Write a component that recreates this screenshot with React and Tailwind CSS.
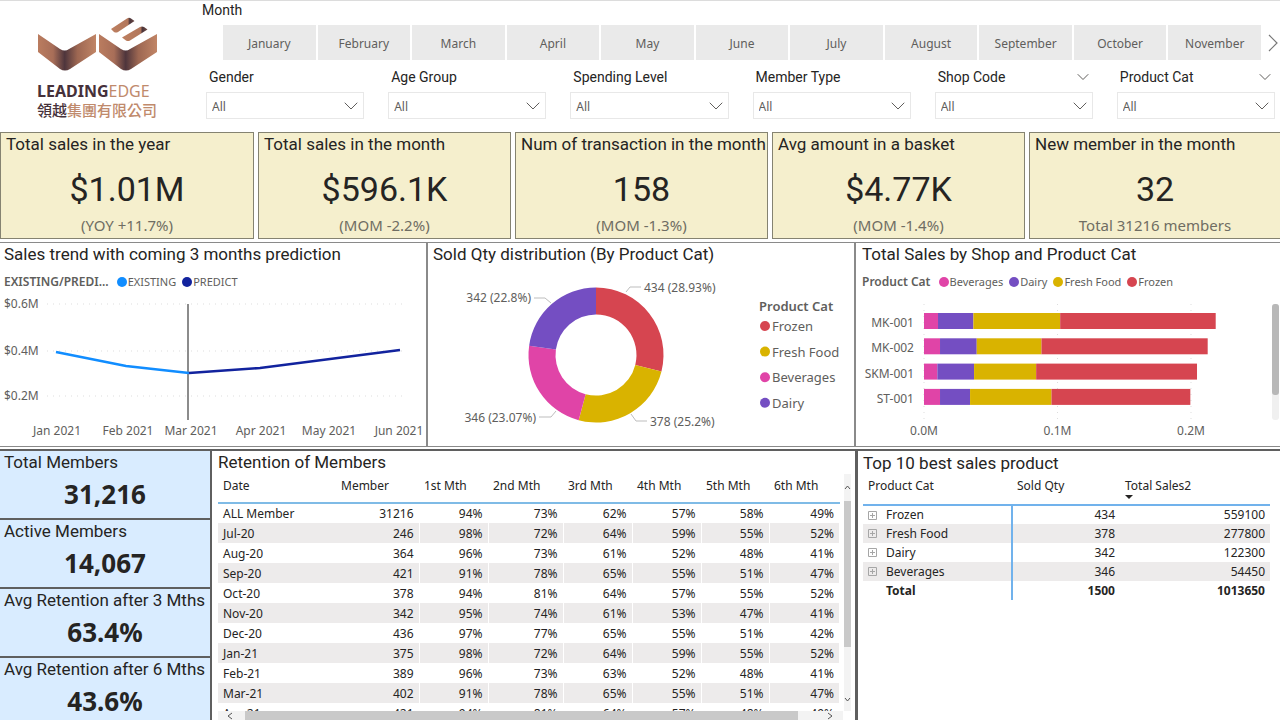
import { useState } from 'react';
import { ChevronDown } from 'lucide-react';

const months = [
  'January', 'February', 'March', 'April', 'May', 'June',
  'July', 'August', 'September', 'October', 'November',
];

const filters = [
  { id: 'gender', name: 'Gender' },
  { id: 'age-group', name: 'Age Group' },
  { id: 'spending-level', name: 'Spending Level' },
  { id: 'member-type', name: 'Member Type' },
  { id: 'shop-code', name: 'Shop Code', menu: true },
  { id: 'product-cat', name: 'Product Cat', menu: true },
];

const kpis = [
  { title: 'Total sales in the year', value: '$1.01M', note: '(YOY +11.7%)' },
  { title: 'Total sales in the month', value: '$596.1K', note: '(MOM -2.2%)' },
  { title: 'Num of transaction in the month', value: '158', note: '(MOM -1.3%)' },
  { title: 'Avg amount in a basket', value: '$4.77K', note: '(MOM -1.4%)' },
  { title: 'New member in the month', value: '32', note: 'Total 31216 members' },
];

const memberStats = [
  { title: 'Total Members', value: '31,216' },
  { title: 'Active Members', value: '14,067' },
  { title: 'Avg Retention after 3 Mths', value: '63.4%' },
  { title: 'Avg Retention after 6 Mths', value: '43.6%' },
];

const colors = {
  Beverages: '#e044a7',
  Dairy: '#744ec2',
  'Fresh Food': '#d9b300',
  Frozen: '#d64550',
  EXISTING: '#118dff',
  PREDICT: '#12239e',
};

// Sold quantity per category, clockwise from the top
const soldQty = [
  { name: 'Frozen', qty: 434 },
  { name: 'Fresh Food', qty: 378 },
  { name: 'Beverages', qty: 346 },
  { name: 'Dairy', qty: 342 },
];

// Sales in thousands, in legend order
const stackOrder = ['Beverages', 'Dairy', 'Fresh Food', 'Frozen'];
const shopSales = [
  { shop: 'MK-001', values: [10.5, 26.5, 65, 116.5] },
  { shop: 'MK-002', values: [12, 27.5, 48.5, 124.5] },
  { shop: 'SKM-001', values: [10, 27.5, 46.5, 120.5] },
  { shop: 'ST-001', values: [12, 22.5, 61, 104] },
];

const retentionHead = ['Date', 'Member', '1st Mth', '2nd Mth', '3rd Mth', '4th Mth', '5th Mth', '6th Mth'];
const retention = [
  ['ALL Member', '31216', '94%', '73%', '62%', '57%', '58%', '49%'],
  ['Jul-20', '246', '98%', '72%', '64%', '59%', '55%', '52%'],
  ['Aug-20', '364', '96%', '73%', '61%', '52%', '48%', '41%'],
  ['Sep-20', '421', '91%', '78%', '65%', '55%', '51%', '47%'],
  ['Oct-20', '378', '94%', '81%', '64%', '57%', '55%', '52%'],
  ['Nov-20', '342', '95%', '74%', '61%', '53%', '47%', '41%'],
  ['Dec-20', '436', '97%', '77%', '65%', '55%', '51%', '42%'],
  ['Jan-21', '375', '98%', '72%', '64%', '59%', '55%', '52%'],
  ['Feb-21', '389', '96%', '73%', '63%', '52%', '48%', '41%'],
  ['Mar-21', '402', '91%', '78%', '65%', '55%', '51%', '47%'],
  ['Apr-21', '421', '94%', '81%', '64%', '57%', '48%', '49%'],
];

const topProducts = [
  ['Frozen', '434', '559100'],
  ['Fresh Food', '378', '277800'],
  ['Dairy', '342', '122300'],
  ['Beverages', '346', '54450'],
];

function Logo() {
  return (
    <div className="w-[198px] shrink-0 pt-4 pl-[37px]">
      <svg width="121" height="56" viewBox="37 17 121 56" role="img" aria-label="Leading Edge logo">
        <defs>
          <linearGradient id="fold">
            <stop offset="0" stopColor="#ba7c5f" />
            <stop offset="0.26" stopColor="#a86e58" />
            <stop offset="0.46" stopColor="#4e353c" />
            <stop offset="0.68" stopColor="#9d6752" />
            <stop offset="1" stopColor="#c18566" />
          </linearGradient>
          <linearGradient id="bar">
            <stop offset="0" stopColor="#bd7f60" />
            <stop offset="0.72" stopColor="#b3775b" />
            <stop offset="0.8" stopColor="#4b343a" />
            <stop offset="1" stopColor="#6d4a45" />
          </linearGradient>
        </defs>
        <path d="M38 34 60 49Q65 52 69 49L96 34V52L70 69Q65 72 60 69L38 52Z" fill="url(#fold)" />
        <path d="M99 34 121 49Q126 52 130 49L157 34V52L131 69Q126 72 121 69L99 52Z" fill="url(#fold)" />
        <path d="M111 29 127 18.5Q129 17 131 18.5L134.500 21 118 32Q116 33 114 32Z" fill="url(#bar)" />
        <path d="M122 37.500 140 27Q142 26 144 27L147.500 29.500 130 40.500Q128 41.500 126 40.500Z" fill="url(#bar)" />
      </svg>
      <p className="mt-2 text-[16px] leading-[20px] text-[#c08a6c]">
        <span className="font-bold text-[#46313a]">LEADING</span>EDGE
      </p>
      <p className="font-['Noto_Sans_CJK_TC',sans-serif] text-[15px] leading-[18px] font-medium text-[#c08a6c]">
        <span className="text-[#46313a]">領越</span>集團有限公司
      </p>
    </div>
  );
}

function MonthSlicer() {
  const [selected, setSelected] = useState(null);

  return (
    <section className="pl-1">
      <h2 className="font-[Roboto,sans-serif] text-[14px] leading-[18px] text-[#252423]">Month</h2>
      <div className="mt-1.5 flex items-center pl-[21px]">
        <div className="grid flex-1 grid-cols-11 gap-0.5">
          {months.map((month) => (
            <button
              key={month}
              type="button"
              aria-pressed={selected === month}
              onClick={() => setSelected(selected === month ? null : month)}
              className="h-[35px] bg-[#eaeaea] pt-0.5 text-[12px] text-[#605e5c]"
            >
              {month}
            </button>
          ))}
        </div>
        <button type="button" aria-label="Next months" className="flex w-[19px] justify-end pr-0.5">
          <svg width="10" height="18" viewBox="0 0 10 18" fill="none" stroke="#777" strokeWidth="1.2">
            <path d="M1 1 9 9 1 17" />
          </svg>
        </button>
      </div>
    </section>
  );
}

function Filter({ filter }) {
  return (
    <div>
      <div className="flex items-center justify-between pl-[3px]">
        <label htmlFor={filter.id} className="font-[Roboto,sans-serif] text-[14px] leading-[18px] text-[#252423]">
          {filter.name}
        </label>
        {filter.menu && <ChevronDown size={20} strokeWidth={1.2} className="-my-px text-[#605e5c]" />}
      </div>
      <div className="relative mt-1.5">
        <select
          id={filter.id}
          className="block h-[27px] w-full appearance-none border border-[#e8e8e8] bg-white px-[5px] pt-0.5 text-[12px] text-[#605e5c]"
        >
          <option>All</option>
        </select>
        <ChevronDown
          size={24}
          strokeWidth={1}
          className="pointer-events-none absolute top-0.5 right-px text-[#605e5c]"
        />
      </div>
    </div>
  );
}

function PanelTitle({ children }) {
  return (
    <h2 className="pt-px font-[Roboto,sans-serif] text-[17px] leading-[20px] whitespace-nowrap text-[#252423]">
      {children}
    </h2>
  );
}

function Legend({ title, items }) {
  return (
    <div className="mt-2 flex h-5 items-center gap-2 text-[12px] whitespace-nowrap text-[#605e5c]">
      <span className="font-semibold">{title}</span>
      <ul className="flex gap-1.5 text-[11px]">
        {items.map((item) => (
          <li key={item} className="flex items-center gap-px">
            <span className="size-2.5 rounded-full" style={{ background: colors[item] }} />
            {item}
          </li>
        ))}
      </ul>
    </div>
  );
}

function TrendChart() {
  return (
    <svg viewBox="0 0 426 150" className="block w-full" fontSize="12" fill="#605e5c" role="img" aria-label="Sales trend">
      {[['$0.6M', 8], ['$0.4M', 55], ['$0.2M', 100]].map(([label, y]) => (
        <g key={label}>
          <text x="4" y={y + 4}>{label}</text>
          <path d={`M47 ${y}H406`} stroke="#ddd" strokeDasharray="1 5" />
        </g>
      ))}
      <path d="M188 8V124" stroke="#8c8c8c" strokeWidth="2" />
      <path d="M56 56 126 70 189 77" stroke={colors.EXISTING} strokeWidth="2.6" fill="none" />
      <path d="M189 77 260 72 400 54" stroke={colors.PREDICT} strokeWidth="2.6" fill="none" />
      <g textAnchor="middle">
        {[['Jan', 57], ['Feb', 128], ['Mar', 191], ['Apr', 261], ['May', 329], ['Jun', 399]].map(([month, x]) => (
          <text key={month} x={x} y="139">{month} 2021</text>
        ))}
      </g>
    </svg>
  );
}

function DonutChart() {
  const total = soldQty.reduce((sum, item) => sum + item.qty, 0);
  const point = (share, r) => {
    const angle = share * 2 * Math.PI;
    return `${168 + r * Math.sin(angle)} ${92 - r * Math.cos(angle)}`;
  };
  let start = 0;

  return (
    <svg viewBox="0 1 426 182" className="block w-full" fontSize="12" fill="#605e5c" role="img" aria-label="Sold quantity">
      {soldQty.map((item) => {
        const from = start;
        const to = start + item.qty / total;
        start = to;
        return (
          <path
            key={item.name}
            fill={colors[item.name]}
            d={`M${point(from, 67.5)}A67.5 67.5 0 0 1 ${point(to, 67.5)}L${point(to, 40.5)}A40.5 40.5 0 0 0 ${point(from, 40.5)}Z`}
          />
        );
      })}
      <path
        d="M198 29 202 24H213M106 35H117L123 40M111 154H123L128 148M203 151 208 158H219"
        fill="none"
        stroke="#bdbdbd"
      />
      <text x="216" y="29">434 (28.93%)</text>
      <text x="222" y="163">378 (25.2%)</text>
      <text x="103" y="39" textAnchor="end">342 (22.8%)</text>
      <text x="108" y="159" textAnchor="end">346 (23.07%)</text>
      <g fontSize="13">
        <text x="331" y="48" fontWeight="600">Product Cat</text>
        {soldQty.map((item, i) => (
          <g key={item.name}>
            <circle cx="337" cy={63 + i * 25.6} r="5" fill={colors[item.name]} />
            <text x="344" y={68 + i * 25.6}>{item.name}</text>
          </g>
        ))}
      </g>
    </svg>
  );
}

function ShopChart() {
  const scale = 1.335;

  return (
    <svg viewBox="0 0 424 150" className="block w-full" fontSize="12" fill="#605e5c" role="img" aria-label="Sales by shop">
      {[['0.0M', 0], ['0.1M', 100], ['0.2M', 200]].map(([label, value]) => (
        <g key={label}>
          <path d={`M${68 + value * scale} 8V124`} stroke="#ddd" strokeDasharray="1 5" />
          <text x={68 + value * scale} y="139" textAnchor="middle">{label}</text>
        </g>
      ))}
      {shopSales.map((row, i) => {
        let x = 68;
        return (
          <g key={row.shop}>
            <text x="58" y={31 + i * 25.3} textAnchor="end">{row.shop}</text>
            {row.values.map((value, j) => {
              const left = x;
              x += value * scale;
              return (
                <rect
                  key={stackOrder[j]}
                  x={left}
                  y={17 + i * 25.3}
                  width={value * scale}
                  height="16"
                  fill={colors[stackOrder[j]]}
                />
              );
            })}
          </g>
        );
      })}
      <rect x="416" y="8" width="7" height="116" rx="3" fill="#f0f0f0" />
      <rect x="416" y="8" width="7" height="91" rx="3" fill="#b8b8b8" />
    </svg>
  );
}

function RetentionPanel() {
  return (
    <section className="flex min-h-0 flex-col overflow-hidden border-t-2 border-r-2 border-[#5f5f5f] pl-1.5">
      <PanelTitle>Retention of Members</PanelTitle>
      <div className="mt-0.5 flex min-h-0 flex-1 gap-1 pr-1">
        <div className="min-h-0 flex-1 overflow-hidden">
          <table className="w-full table-fixed border-collapse text-[12px] leading-[18px] text-[#252423]">
            <colgroup>
              <col className="w-[118px]" />
              <col className="w-[83px]" />
              <col className="w-[69px]" />
              <col className="w-[75px]" />
              <col className="w-[69px]" />
              <col className="w-[69px]" />
              <col className="w-[68px]" />
              <col />
            </colgroup>
            <thead>
              <tr className="h-[29px] border-b-2 border-[#7fbbe6]">
                {retentionHead.map((name) => (
                  <th key={name} scope="col" className="px-[5px] pb-1 text-left font-normal whitespace-nowrap">
                    {name}
                  </th>
                ))}
              </tr>
            </thead>
            <tbody>
              {retention.map(([date, ...cells]) => (
                <tr key={date} className="h-5 even:bg-[#edebeb]">
                  <th scope="row" className="px-[5px] pt-px text-left font-normal">{date}</th>
                  {cells.map((cell, i) => (
                    <td key={i} className="border-r border-white px-[5px] pt-px text-right">{cell}</td>
                  ))}
                </tr>
              ))}
            </tbody>
          </table>
        </div>
        <div className="flex w-[7px] flex-col items-center bg-[#f3f3f3]">
          <svg width="7" height="27" viewBox="0 0 7 27" fill="none" stroke="#555">
            <path d="M1 15 3.5 12 6 15" />
          </svg>
          <div className="w-full flex-[146] bg-[#c9c9c9]" />
          <div className="flex-[44]" />
          <svg width="7" height="20" viewBox="0 0 7 20" fill="none" stroke="#555">
            <path d="M1 7 3.5 10 6 7" />
          </svg>
        </div>
      </div>
      <div className="mr-3 flex h-[9px] shrink-0 items-center bg-[#f3f3f3]">
        <svg width="27" height="9" viewBox="0 0 27 9" fill="none" stroke="#555">
          <path d="M14 2 10 5 14 8" />
        </svg>
        <div className="h-full flex-[553] bg-[#c9c9c9]" />
        <svg width="45" height="9" viewBox="0 0 45 9" fill="none" stroke="#555">
          <path d="M30 2 34 5 30 8" />
        </svg>
      </div>
    </section>
  );
}

function ExpandIcon() {
  return (
    <svg width="9" height="9" viewBox="0 0 9 9" fill="none" stroke="#a6a6a6">
      <path d="M.5 .5H8.5V8.5H.5ZM2 4.5H7M4.5 2V7" />
    </svg>
  );
}

function TopProductsPanel() {
  return (
    <section className="border-t-2 border-l border-[#5f5f5f] pt-px pr-2.5 pl-[5px]">
      <PanelTitle>Top 10 best sales product</PanelTitle>
      <table className="mt-1 w-full table-fixed border-collapse text-[12px] leading-[18px] text-[#252423]">
        <colgroup>
          <col className="w-[149px]" />
          <col className="w-[108px]" />
          <col />
        </colgroup>
        <thead>
          <tr className="h-[28px] border-b-2 border-[#71b2ec] text-left align-top whitespace-nowrap">
            <th scope="col" className="px-[5px] font-normal">Product Cat</th>
            <th scope="col" className="px-[5px] font-normal">Sold Qty</th>
            <th scope="col" aria-sort="descending" className="px-[5px] font-normal">
              Total Sales2
              <svg width="8" height="4" viewBox="0 0 8 4" className="block">
                <path d="M0 0H8L4 4Z" fill="#252423" />
              </svg>
            </th>
          </tr>
        </thead>
        <tbody>
          {topProducts.map(([name, qty, sales]) => (
            <tr key={name} className="h-[19px] even:bg-[#edebeb]">
              <th scope="row" className="border-r-2 border-[#71b2ec] px-[5px] font-normal">
                <span className="flex items-center gap-[9px]">
                  <button type="button" aria-label={`Expand ${name}`}>
                    <ExpandIcon />
                  </button>
                  {name}
                </span>
              </th>
              <td className="px-[5px] text-right">{qty}</td>
              <td className="px-[5px] text-right">{sales}</td>
            </tr>
          ))}
        </tbody>
        <tfoot>
          <tr className="h-[19px] font-bold">
            <th scope="row" className="border-r-2 border-[#71b2ec] pl-[23px] text-left">Total</th>
            <td className="px-[5px] text-right">1500</td>
            <td className="px-[5px] text-right">1013650</td>
          </tr>
        </tfoot>
      </table>
    </section>
  );
}

export default function App() {
  return (
    <main className="flex h-screen flex-col overflow-hidden bg-white font-['Noto_Sans',sans-serif]">
      <header className="flex h-[132px] shrink-0 border-t border-[#dcdcdc]">
        <Logo />
        <div className="min-w-0 flex-1">
          <MonthSlicer />
          <div className="mt-2 grid grid-cols-6 gap-6 pr-[5px] pl-2">
            {filters.map((filter) => (
              <Filter key={filter.id} filter={filter} />
            ))}
          </div>
        </div>
      </header>

      {/* Sales figures */}
      <div className="grid shrink-0 grid-cols-[254fr_253fr_253fr_253fr_251fr] gap-1">
        {kpis.map((kpi) => (
          <section key={kpi.title} className="h-[107px] border border-[#858371] bg-[#f5efcd] last:border-r-0">
            <div className="pl-[5px]">
              <PanelTitle>{kpi.title}</PanelTitle>
            </div>
            <p className="mt-3.5 text-center font-[Roboto,sans-serif] text-[34px] leading-[42px] text-[#252423]">
              {kpi.value}
            </p>
            <p className="mt-1 text-center text-[15px] leading-[22px] text-[#6f6d63]">{kpi.note}</p>
          </section>
        ))}
      </div>

      {/* Charts */}
      <div className="mt-[3px] grid shrink-0 grid-cols-[428fr_428fr_424fr]">
        <section className="border-y border-r-2 border-[#8a8a8a]">
          <div className="pl-1">
            <PanelTitle>Sales trend with coming 3 months prediction</PanelTitle>
            <Legend title="EXISTING/PREDI..." items={['EXISTING', 'PREDICT']} />
          </div>
          <div className="mt-1">
            <TrendChart />
          </div>
        </section>
        <section className="border-y border-r-2 border-[#8a8a8a]">
          <div className="pl-[5px]">
            <PanelTitle>Sold Qty distribution (By Product Cat)</PanelTitle>
          </div>
          <DonutChart />
        </section>
        <section className="border-y border-[#8a8a8a]">
          <div className="pl-1.5">
            <PanelTitle>Total Sales by Shop and Product Cat</PanelTitle>
            <Legend title="Product Cat" items={stackOrder} />
          </div>
          <div className="mt-1">
            <ShopChart />
          </div>
        </section>
      </div>

      {/* Members and products */}
      <div className="mt-0.5 grid min-h-0 flex-1 grid-cols-[212fr_645fr_423fr] grid-rows-[minmax(0,1fr)]">
        <div className="overflow-hidden border-r-2 border-[#5f5f5f] bg-[#d9ecff]">
          {memberStats.map((stat) => (
            <section key={stat.title} className="h-[69px] border-t-2 border-[#5f5f5f] pl-1">
              <PanelTitle>{stat.title}</PanelTitle>
              <p className="mt-1.5 pr-1 text-center text-[26px] leading-[32px] font-bold text-[#252423]">{stat.value}</p>
            </section>
          ))}
        </div>
        <RetentionPanel />
        <TopProductsPanel />
      </div>
    </main>
  );
}
